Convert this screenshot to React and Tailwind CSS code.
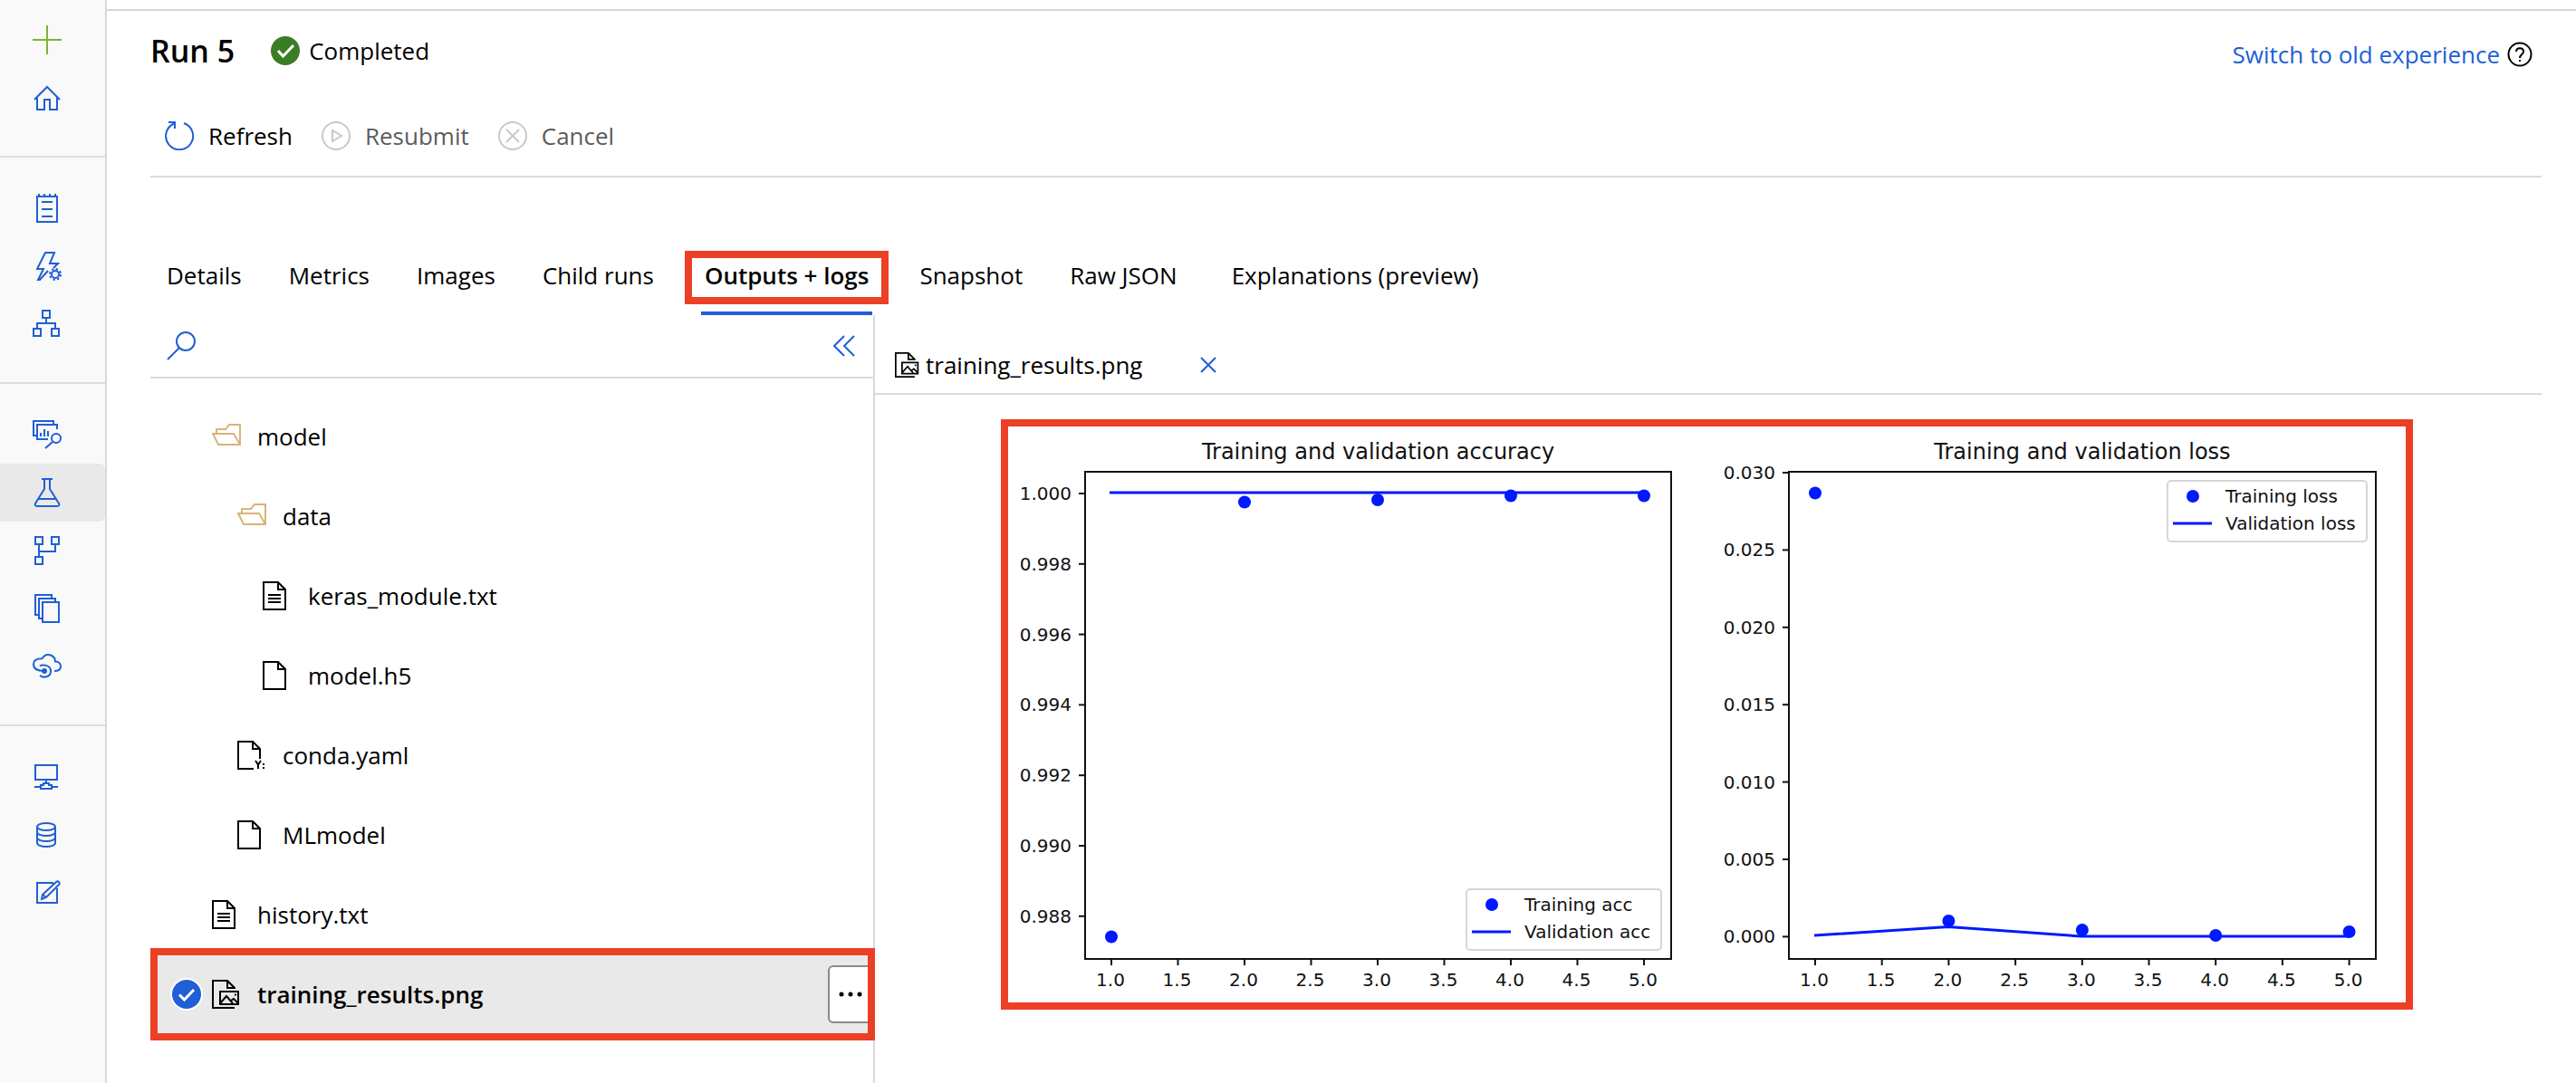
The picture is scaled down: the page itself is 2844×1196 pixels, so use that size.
import React from "react";

const stroke = { fill: "none", stroke: "currentColor", strokeWidth: 2 };

function Icon({ children, label, className = "size-8" }) {
  return (
    <svg
      viewBox="0 0 32 32"
      className={`${className} shrink-0`}
      role={label ? "img" : undefined}
      aria-label={label}
      aria-hidden={label ? undefined : true}
      {...stroke}
    >
      {children}
    </svg>
  );
}

const NAV_GROUPS = [
  [
    {
      name: "New",
      color: "text-[#7ab536]",
      art: <path d="M16 0V32M0 16H32" />,
    },
    {
      name: "Home",
      art: <path d="M2 18L16 4L30 18M5 15V29H13V18H19V29H27V15" />,
    },
  ],
  [
    {
      name: "Notebooks",
      art: <path d="M5 3H27V31H5ZM7 0V3M13 0V3M19 0V3M25 0V3M10 9H22M10 17H22M10 25H22" />,
    },
    {
      name: "Automated ML",
      art: (
        <>
          <path d="M23 18L28 13H19L24 1H14L5 19H12L6 31H8L17 21" />
          <circle cx="25" cy="25" r="4" />
          <circle cx="25" cy="25" r="6" strokeDasharray="2.4 2.31" />
        </>
      ),
    },
    {
      name: "Designer",
      art: <path d="M11 1H19V9H11ZM15 9V15M5 21V15H25V21M1 21H9V29H1ZM21 21H29V29H21Z" />,
    },
  ],
  [
    {
      name: "Datasets",
      art: (
        <>
          <path d="M23 4V1H1V17H5M17 21H5V5H27V10M9 18V14M13 18V10M17 18V12" />
          <ellipse cx="26" cy="20" rx="5" ry="5" />
          <path d="M22 24L14 31" />
        </>
      ),
    },
    {
      name: "Experiments",
      active: true,
      art: <path d="M10 1H22M13 1V12L3 28C2 30 3 31 5 31H27C29 31 30 30 29 28L19 12V1M7 23H25" />,
    },
    {
      name: "Pipelines",
      art: <path d="M3 1H11V9H3ZM21 1H29V9H21ZM3 23H11V31H3ZM7 9V23M7 17H25V9" />,
    },
    {
      name: "Models",
      art: <path d="M11 9H29V31H11ZM25 9V5H7V27H11M21 5V1H3V23H7" />,
    },
    {
      name: "Endpoints",
      art: (
        <>
          <path d="M13 21C6 21 1 18.5 1 13.5C1 9.5 4 7.3 10.5 7.3C12.5 4 15 3 17 3C21 3 25 5.5 25 10.5C29.5 10.5 31 13.5 31 16C31 19 28.5 21 24 21M8 15.5C10 14 20 13.5 20 21C20 28 12 29 8 26" />
          <circle cx="13" cy="21" r="3" fill="currentColor" stroke="none" />
        </>
      ),
    },
  ],
  [
    {
      name: "Compute",
      art: <path d="M3 3H27V19H3ZM15 19V22M9 29V25H12V23H18V25H21V29ZM2 27H9M21 27H28" />,
    },
    {
      name: "Datastores",
      art: (
        <>
          <ellipse cx="15" cy="7" rx="10" ry="4" />
          <path d="M5 7V25C5 27.2 9.5 29 15 29S25 27.2 25 25V7M5 13C5 15.2 9.5 17 15 17S25 15.2 25 13M5 19C5 21.2 9.5 23 15 23S25 21.2 25 19" />
        </>
      ),
    },
    {
      name: "Data labeling",
      art: <path d="M23 5H5V27H27V11M10 23L11 18L26 4C28 2 31 5 29 7L15 21ZM11 18L15 21" />,
    },
  ],
];

const PAGE = "M1 1H17L25 9V31H1ZM17 1V9H25";

const FILE_ART = {
  folder: <path d="M5 13V8H15L19 3H31V25H7L1 13H24L31 25" />,
  text: <path d={PAGE + "M6 15H20M6 19H20M6 23H20"} />,
  file: <path d={PAGE} />,
  yaml: (
    <>
      <path d="M18 31H1V1H17L25 9V20M17 1V9H25" />
      <path d="M20 22L23 26.5L26 22M23 26.5V31M29 25V27M29 29V31" />
    </>
  ),
  image: (
    <>
      <path d="M25 10V9L17 1H1V31H25M17 1V9H25M9 13H29V27H9ZM9 26L16 18L23 26M21 23L24 21L29 26" />
      <path d="M25 16.5H27" />
    </>
  ),
};

const FILES = [
  { name: "model", kind: "folder", indent: "pl-0" },
  { name: "data", kind: "folder", indent: "pl-7" },
  { name: "keras_module.txt", kind: "text", indent: "pl-14" },
  { name: "model.h5", kind: "file", indent: "pl-14" },
  { name: "conda.yaml", kind: "yaml", indent: "pl-7" },
  { name: "MLmodel", kind: "file", indent: "pl-7" },
  { name: "history.txt", kind: "text", indent: "pl-0" },
  { name: "training_results.png", kind: "image", indent: "pl-0", selected: true },
];

const TABS = [
  "Details",
  "Metrics",
  "Images",
  "Child runs",
  "Outputs + logs",
  "Snapshot",
  "Raw JSON",
  "Explanations (preview)",
];

function Sidebar() {
  return (
    <nav
      aria-label="Workspace"
      className="w-[118px] shrink-0 border-r-2 border-[#dadada] bg-[#f9f9f9] text-[#205fd6]"
    >
      {NAV_GROUPS.map((group, i) => (
        <ul
          key={i}
          className={
            i === 0
              ? "border-b-2 border-[#dedede] pt-3 pb-8"
              : i < NAV_GROUPS.length - 1
                ? "border-b-2 border-[#dedede] pt-6 pb-8"
                : "pt-6 pb-8"
          }
        >
          {group.map((item) => (
            <li key={item.name}>
              <a
                href="#"
                aria-label={item.name}
                aria-current={item.active ? "page" : undefined}
                className={`flex h-16 items-center pl-9 ${item.color ?? ""} ${
                  item.active ? "rounded-r-md bg-[#e9e9e9]" : ""
                }`}
              >
                <Icon>{item.art}</Icon>
              </a>
            </li>
          ))}
        </ul>
      ))}
    </nav>
  );
}

function Header() {
  return (
    <header className="flex h-28 items-center justify-between">
      <div className="flex items-center">
        <h1 className="text-[34px] leading-10 font-semibold">Run 5</h1>
        <div className="ml-10 flex items-center gap-2.5">
          <svg viewBox="0 0 32 32" className="size-8" fill="none" aria-hidden="true">
            <circle cx="16" cy="16" r="16" fill="#3a7d25" />
            <path d="M8 16L13.5 22L25 10" stroke="white" strokeWidth="3" />
          </svg>
          <span>Completed</span>
        </div>
      </div>
      <div className="flex items-center gap-2 pt-2 pr-2.5">
        <a href="#" className="text-[#205fd6]">
          Switch to old experience
        </a>
        <button type="button" aria-label="Help">
          <svg viewBox="0 0 28 28" className="size-7" {...stroke}>
            <circle cx="14" cy="14" r="12.5" />
            <path d="M10 11C10 6 18 6 18 11C18 14 14 14 14 18M14 20V22" />
          </svg>
        </button>
      </div>
    </header>
  );
}

function Toolbar() {
  return (
    <div className="flex h-[84px] items-center gap-8 border-b-2 border-[#dadada] pb-1.5 pl-4">
      <button type="button" className="flex items-center gap-4">
        <span className="text-[#205fd6]">
          <Icon>
            <path d="M21 2A15 15 0 1 1 10 2.5M4 1H11V8" />
          </Icon>
        </span>
        Refresh
      </button>
      <button type="button" disabled className="flex items-center gap-4 text-[#5c5c5c]">
        <span className="text-[#c8c8c8]">
          <Icon>
            <circle cx="16" cy="16" r="15" />
            <path d="M12 10V22L22 16Z" />
          </Icon>
        </span>
        Resubmit
      </button>
      <button type="button" disabled className="flex items-center gap-4 text-[#5c5c5c]">
        <span className="text-[#c8c8c8]">
          <Icon>
            <circle cx="16" cy="16" r="15" />
            <path d="M9 9L23 23M23 9L9 23" />
          </Icon>
        </span>
        Cancel
      </button>
    </div>
  );
}

function Tabs() {
  return (
    <div role="tablist" className="flex items-end gap-[52px] pt-20 pl-[18px]">
      {TABS.map((tab) => {
        const selected = tab === "Outputs + logs";
        return (
          <button
            key={tab}
            type="button"
            role="tab"
            aria-selected={selected}
            className={`relative h-[72px] border-b-4 pb-3 whitespace-nowrap last:ml-2 ${
              selected ? "border-[#205fd6] px-1 font-semibold" : "border-transparent"
            }`}
          >
            {tab}
            {selected && (
              <span className="absolute -inset-x-[18px] top-px h-[59px] border-8 border-[#ec4026]" />
            )}
          </button>
        );
      })}
    </div>
  );
}

function FileRow({ file }) {
  return (
    <li
      className={`relative flex h-[88px] items-center ${file.selected ? "bg-[#e9e9e9]" : ""}`}
    >
      <div className="flex w-[68px] shrink-0 pl-6">
        {file.selected && (
          <span className="relative flex size-8">
            <input
              type="checkbox"
              defaultChecked
              aria-label={`Select ${file.name}`}
              className="size-8 appearance-none rounded-full bg-[#205fd6] ring-2 ring-white"
            />
            <svg viewBox="0 0 32 32" className="pointer-events-none absolute inset-0" fill="none" aria-hidden="true">
              <path d="M8 16.5L13.5 22L24 11" stroke="white" strokeWidth="3" />
            </svg>
          </span>
        )}
      </div>
      <button type="button" className={`flex flex-1 items-center gap-[18px] ${file.indent}`}>
        <span className={file.kind === "folder" ? "text-[#d8b479]" : ""}>
          <Icon>{FILE_ART[file.kind]}</Icon>
        </span>
        <span className={file.selected ? "font-semibold" : ""}>{file.name}</span>
      </button>
      {file.selected && (
        <>
          <button
            type="button"
            aria-label="More actions"
            className="flex h-16 w-[50px] items-center rounded-l-md border-2 border-r-0 border-[#8a8a8a] bg-white pl-2.5"
          >
            <svg viewBox="0 0 26 6" className="h-1.5 w-[26px]" fill="currentColor">
              <circle cx="3" cy="3" r="2.5" />
              <circle cx="13" cy="3" r="2.5" />
              <circle cx="23" cy="3" r="2.5" />
            </svg>
          </button>
          <span className="pointer-events-none absolute -inset-y-[7px] -right-0.5 left-0 border-8 border-[#ec4026]" />
        </>
      )}
    </li>
  );
}

function FilePanel() {
  return (
    <section aria-label="Files" className="w-[800px] shrink-0 border-r-2 border-[#dadada]">
      <div className="flex h-[70px] items-center justify-between border-b-2 border-[#dadada] pr-5 pl-[18px] text-[#205fd6]">
        <button type="button" aria-label="Search files">
          <Icon>
            <circle cx="21" cy="11" r="10" />
            <path d="M14 18L1 31" />
          </Icon>
        </button>
        <button type="button" aria-label="Collapse panel">
          <svg viewBox="0 0 24 24" className="size-6" {...stroke}>
            <path d="M12 1L1 12L12 23M23 1L12 12L23 23" />
          </svg>
        </button>
      </div>
      <ul className="pt-5">
        {FILES.map((file) => (
          <FileRow key={file.name} file={file} />
        ))}
      </ul>
    </section>
  );
}

const X_LABELS = ["1.0", "1.5", "2.0", "2.5", "3.0", "3.5", "4.0", "4.5", "5.0"];
const BLUE = "#0019ff";

function Plot({ title, left, top, width, height, x0, dx, y0, dy, yLabels, points, line, legend }) {
  const bottom = top + height;
  return (
    <g>
      <text x={left + width / 2} y={top - 14} fontSize="24" textAnchor="middle">
        {title}
      </text>
      <rect x={left} y={top} width={width} height={height} fill="none" stroke="#111" strokeWidth="2" />
      {yLabels.map((label, i) => (
        <g key={label}>
          <path d={`M${left - 7} ${y0 + i * dy}H${left}`} stroke="#111" strokeWidth="2" />
          <text x={left - 15} y={y0 + i * dy + 7} fontSize="20" textAnchor="end">
            {label}
          </text>
        </g>
      ))}
      {X_LABELS.map((label, i) => (
        <g key={label}>
          <path d={`M${x0 + i * dx} ${bottom}V${bottom + 7}`} stroke="#111" strokeWidth="2" />
          <text x={x0 + i * dx - 1} y={bottom + 30} fontSize="20" textAnchor="middle">
            {label}
          </text>
        </g>
      ))}
      <polyline points={line} fill="none" stroke={BLUE} strokeWidth="3" />
      {points.map((y, i) => (
        <circle key={i} cx={x0 + i * 2 * dx} cy={y} r="7" fill={BLUE} />
      ))}
      <rect
        x={legend.x}
        y={legend.y}
        width={legend.width}
        height="67"
        rx="4"
        fill="white"
        stroke="#d6d6d6"
        strokeWidth="2"
      />
      <circle cx={legend.x + 28} cy={legend.y + 17} r="7" fill={BLUE} />
      <path d={`M${legend.x + 6} ${legend.y + 47}h43`} stroke={BLUE} strokeWidth="3" />
      <text x={legend.x + 64} y={legend.y + 24} fontSize="20">
        {legend.labels[0]}
      </text>
      <text x={legend.x + 64} y={legend.y + 54} fontSize="20">
        {legend.labels[1]}
      </text>
    </g>
  );
}

function Figure() {
  return (
    <svg
      viewBox="1113 471 1543 636"
      className="block w-full"
      fill="#111"
      fontFamily='"DejaVu Sans", sans-serif'
      role="img"
      aria-label="Training and validation accuracy and loss"
    >
      <Plot
        title="Training and validation accuracy"
        left={1198}
        top={521}
        width={647}
        height={538}
        x0={1227}
        dx={73.5}
        y0={545}
        dy={77.8}
        yLabels={["1.000", "0.998", "0.996", "0.994", "0.992", "0.990", "0.988"]}
        points={[1034.5, 554.5, 552, 547.5, 547.5]}
        line="1225,544 1815,544"
        legend={{ x: 1619, y: 982, width: 215, labels: ["Training acc", "Validation acc"] }}
      />
      <Plot
        title="Training and validation loss"
        left={1975}
        top={521}
        width={648}
        height={538}
        x0={2004}
        dx={73.7}
        y0={522}
        dy={85.4}
        yLabels={["0.030", "0.025", "0.020", "0.015", "0.010", "0.005", "0.000"]}
        points={[544.5, 1017, 1027, 1033, 1029]}
        line="2003,1033 2151,1023.5 2298,1034 2593,1034"
        legend={{ x: 2393, y: 531, width: 220, labels: ["Training loss", "Validation loss"] }}
      />
    </svg>
  );
}

function Preview() {
  return (
    <section aria-label="Preview" className="min-w-0 flex-1">
      <div className="flex h-[88px] items-center border-b-2 border-[#dadada] pt-7 pl-[22px] pb-1">
        <Icon className="size-7">{FILE_ART.image}</Icon>
        <span className="pl-1.5">training_results.png</span>
        <button type="button" aria-label="Close training_results.png" className="ml-16 text-[#205fd6]">
          <svg viewBox="0 0 18 18" className="size-[18px]" {...stroke}>
            <path d="M1 1L17 17M17 1L1 17" />
          </svg>
        </button>
      </div>
      <div className="pt-[27px] pr-1">
        <div className="mx-auto max-w-[1559px] border-8 border-[#ec4026]">
          <Figure />
        </div>
      </div>
    </section>
  );
}

export default function App() {
  return (
    <div className="flex min-h-screen bg-white font-['Open_Sans','Noto_Sans',sans-serif] text-[26px] leading-9 text-black">
      <Sidebar />
      <div className="flex min-w-0 flex-1 flex-col pt-2.5">
        <div className="border-t-2 border-[#d6d6d6]" />
        <main className="-mt-3 flex flex-1 flex-col pr-[38px] pl-12">
          <Header />
          <Toolbar />
          <Tabs />
          <div className="flex flex-1">
            <FilePanel />
            <Preview />
          </div>
        </main>
      </div>
    </div>
  );
}
